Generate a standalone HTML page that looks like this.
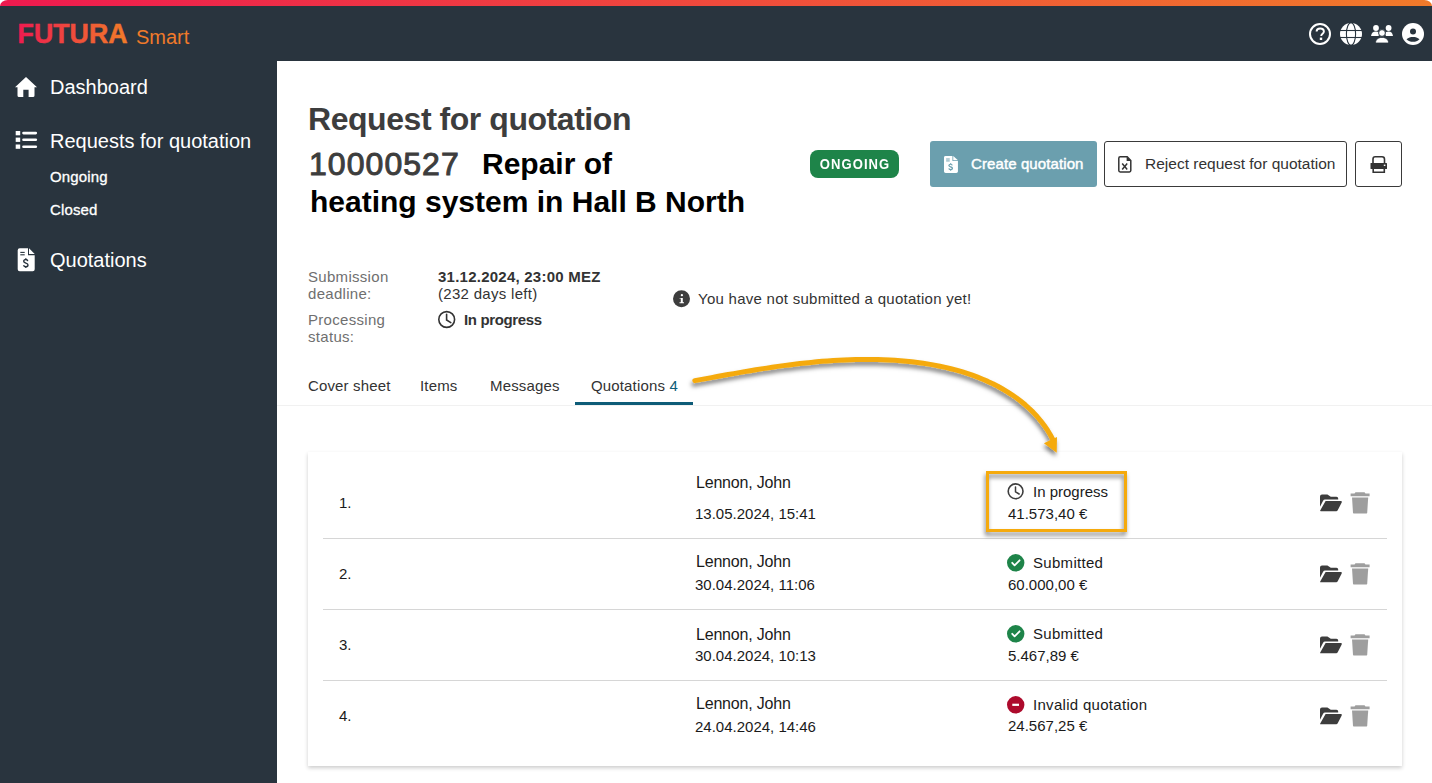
<!DOCTYPE html>
<html><head><meta charset="utf-8">
<style>
*{margin:0;padding:0;box-sizing:border-box}
html,body{width:1432px;height:783px;overflow:hidden;background:#fff;font-family:"Liberation Sans",sans-serif}
.abs{position:absolute;white-space:nowrap}
#topbar{position:absolute;left:0;top:6px;width:1432px;height:55px;background:#29343e}
#grad{position:absolute;left:0;top:0;width:1432px;height:6px;border-radius:9px 9px 0 0 / 7px 7px 0 0;background:linear-gradient(90deg,#ee1a4f 0%,#ef4a3c 50%,#f07a2a 100%)}
#side{position:absolute;left:0;top:61px;width:277px;height:722px;background:#29343e}
.nav{color:#fff;font-size:20px}
.row{font-size:15px;color:#1a1a1a;line-height:18px}
.name{font-size:16px;letter-spacing:-0.2px}
.sub{color:#fff;font-size:15px;-webkit-text-stroke:0.3px #fff;letter-spacing:0.15px}
</style></head>
<body>
<div id="grad"></div><div id="topbar"></div>
<div id="side"></div>

<!-- logo -->
<svg class="abs" style="left:0;top:0" width="200" height="61"><defs><linearGradient id="lg" gradientUnits="userSpaceOnUse" x1="17" y1="0" x2="128" y2="0"><stop offset="0" stop-color="#ee1a50"/><stop offset="1" stop-color="#f17d28"/></linearGradient></defs>
<text x="17.6" y="43.4" font-family="Liberation Sans" font-weight="bold" font-size="27.2" fill="url(#lg)" stroke="url(#lg)" stroke-width="0.45" textLength="110" lengthAdjust="spacingAndGlyphs">FUTURA</text></svg>
<div class="abs" style="left:136px;top:24px;font-size:20px;line-height:26px;color:#f07a2a">Smart</div>

<!-- nav -->
<div class="abs nav" style="left:50px;top:75px;line-height:24px">Dashboard</div>
<div class="abs nav" style="left:50px;top:129px;line-height:24px">Requests for quotation</div>
<div class="abs sub" style="left:50px;top:167px;line-height:20px">Ongoing</div>
<div class="abs sub" style="left:50px;top:200px;line-height:20px">Closed</div>
<div class="abs nav" style="left:50px;top:248px;line-height:24px">Quotations</div>

<!-- title -->
<div class="abs" style="left:308px;top:100px;font-size:32px;font-weight:bold;color:#3d3d3d;line-height:38px;letter-spacing:-0.45px">Request for quotation</div>
<div class="abs" style="left:309px;top:145px;font-size:32px;color:#3d3d3d;line-height:38px;letter-spacing:1.05px;-webkit-text-stroke:1px #3d3d3d">10000527</div>
<div class="abs" style="left:482px;top:145px;font-size:30px;font-weight:bold;color:#000;line-height:38px">Repair of</div>
<div class="abs" style="left:310px;top:183px;font-size:30px;font-weight:bold;color:#000;line-height:38px">heating system in Hall B North</div>


<!-- badge -->
<div class="abs" style="left:810px;top:150px;width:89px;height:28px;background:#1e8449;border-radius:8px"></div>
<div class="abs" style="left:810px;top:150px;width:89px;height:28px;color:#fff;font-size:14.5px;font-weight:bold;letter-spacing:1.2px;text-indent:1.2px;line-height:28px;text-align:center;transform:scaleX(0.9)">ONGOING</div>

<!-- create button -->
<div class="abs" style="left:930px;top:141px;width:167px;height:46px;background:#6b9fae;border-radius:3px"></div>
<div class="abs" style="left:971px;top:154px;font-size:15px;color:#fff;line-height:20px;-webkit-text-stroke:0.45px #fff;letter-spacing:0.1px">Create quotation</div>
<!-- reject button -->
<div class="abs" style="left:1104px;top:141px;width:243px;height:46px;border:1px solid #3a3a3a;border-radius:3px"></div>
<div class="abs" style="left:1145px;top:154px;font-size:15.5px;color:#333;line-height:20px">Reject request for quotation</div>
<!-- print button -->
<div class="abs" style="left:1355px;top:141px;width:47px;height:46px;border:1px solid #3a3a3a;border-radius:3px"></div>

<!-- details -->
<div class="abs" style="left:308px;top:268px;font-size:15px;color:#6f6f6f;line-height:17px;letter-spacing:0.3px">Submission<br>deadline:</div>
<div class="abs" style="left:438px;top:268px;font-size:15px;color:#333;line-height:17px;letter-spacing:0.3px"><b style="letter-spacing:0.24px">31.12.2024, 23:00 MEZ</b><br>(232 days left)</div>
<div class="abs" style="left:308px;top:311px;font-size:15px;color:#6f6f6f;line-height:17px;letter-spacing:0.3px">Processing<br>status:</div>
<div class="abs" style="left:464px;top:311px;font-size:15px;color:#333;line-height:17px;font-weight:bold;letter-spacing:-0.36px">In progress</div>
<div class="abs" style="left:698px;top:290px;font-size:15px;color:#333;line-height:18px;letter-spacing:0.27px">You have not submitted a quotation yet!</div>

<!-- tabs -->
<div class="abs" style="left:277px;top:405px;width:1155px;height:1px;background:#f1f1f1"></div>
<div class="abs" style="left:308px;top:377px;font-size:15px;color:#333;line-height:18px;letter-spacing:0.15px">Cover sheet</div>
<div class="abs" style="left:420px;top:377px;font-size:15px;color:#333;line-height:18px;letter-spacing:0.15px">Items</div>
<div class="abs" style="left:490px;top:377px;font-size:15px;color:#333;line-height:18px;letter-spacing:0.15px">Messages</div>
<div class="abs" style="left:591px;top:377px;font-size:15px;color:#333;line-height:18px;letter-spacing:0.15px">Quotations <span style="color:#0e5c78">4</span></div>
<div class="abs" style="left:575px;top:402px;width:118px;height:3px;background:#0e5c78"></div>

<!-- card -->
<div class="abs" style="left:308px;top:452px;width:1094px;height:314px;background:#fff;box-shadow:0 1.5px 4px rgba(0,0,0,0.2)"></div>
<div class="abs" style="left:323px;top:538px;width:1064px;height:1px;background:#d6d6d6"></div>
<div class="abs" style="left:323px;top:609px;width:1064px;height:1px;background:#d6d6d6"></div>
<div class="abs" style="left:323px;top:680px;width:1064px;height:1px;background:#d6d6d6"></div>

<div class="abs row" style="left:339px;top:494px">1.</div>
<div class="abs row name" style="left:696px;top:474.4px">Lennon, John</div>
<div class="abs row" style="left:695px;top:505px">13.05.2024, 15:41</div>
<div class="abs row" style="left:1033px;top:483px">In progress</div>
<div class="abs row" style="left:1008px;top:505px">41.573,40 €</div>

<div class="abs row" style="left:339px;top:565px">2.</div>
<div class="abs row name" style="left:696px;top:553.3px">Lennon, John</div>
<div class="abs row" style="left:695px;top:576px">30.04.2024, 11:06</div>
<div class="abs row" style="left:1033px;top:554px;letter-spacing:0.3px">Submitted</div>
<div class="abs row" style="left:1008px;top:576px">60.000,00 €</div>

<div class="abs row" style="left:339px;top:636px">3.</div>
<div class="abs row name" style="left:696px;top:625.5px">Lennon, John</div>
<div class="abs row" style="left:695px;top:647px">30.04.2024, 10:13</div>
<div class="abs row" style="left:1033px;top:625px;letter-spacing:0.3px">Submitted</div>
<div class="abs row" style="left:1008px;top:647px">5.467,89 €</div>

<div class="abs row" style="left:339px;top:707px">4.</div>
<div class="abs row name" style="left:696px;top:694.5px">Lennon, John</div>
<div class="abs row" style="left:695px;top:718px">24.04.2024, 14:46</div>
<div class="abs row" style="left:1033px;top:696px;letter-spacing:0.3px">Invalid quotation</div>
<div class="abs row" style="left:1008px;top:717px">24.567,25 €</div>

<!-- highlight box -->


<svg class="abs" style="left:0;top:0;pointer-events:none" width="1432" height="783" viewBox="0 0 1432 783">
<defs>
<filter id="sh" x="-10%" y="-20%" width="120%" height="150%"><feDropShadow dx="-1" dy="3.5" stdDeviation="2" flood-color="#000" flood-opacity="0.5"/></filter>
</defs>
<!-- header icons -->
<circle cx="1320" cy="34" r="10" fill="none" stroke="#fff" stroke-width="2"/>
<path d="M1316.6,31.6 C1316.6,29.5 1318.2,28.5 1320.2,28.5 C1322.3,28.5 1323.9,29.7 1323.9,31.4 C1323.9,33.6 1321.2,33.8 1321.2,36" fill="none" stroke="#fff" stroke-width="1.9"/>
<rect x="1319.8" y="37.6" width="2.4" height="2.4" fill="#fff"/>
<circle cx="1351" cy="34" r="11" fill="#fff"/>
<g stroke="#29343e" stroke-width="1.1" fill="none">
<line x1="1339" y1="30.5" x2="1363" y2="30.5"/><line x1="1339" y1="37.5" x2="1363" y2="37.5"/>
<ellipse cx="1351" cy="34" rx="4.6" ry="11.3"/>
</g>
<circle cx="1376" cy="28" r="2.9" fill="#fff"/>
<circle cx="1388.6" cy="28" r="2.9" fill="#fff"/>
<path d="M1371,36 C1371.5,33 1373,31.6 1376,31.6 C1378,31.6 1379,32.3 1379.6,33.5 L1378.5,36 Z" fill="#fff"/>
<path d="M1393,36 C1392.5,33 1391,31.6 1388.6,31.6 C1386.5,31.6 1385.5,32.3 1384.9,33.5 L1386,36 Z" fill="#fff"/>
<circle cx="1382" cy="33" r="3.4" fill="#fff" stroke="#29343e" stroke-width="1"/>
<path d="M1375.5,43 C1375.5,39.5 1378.3,37.4 1382,37.4 C1385.8,37.4 1388.6,39.5 1388.6,43 Z" fill="#fff" stroke="#29343e" stroke-width="0.8"/>
<circle cx="1413" cy="34" r="11" fill="#fff"/>
<circle cx="1413" cy="31.5" r="3" fill="#29343e"/>
<path d="M1406.5,39.3 C1408.5,37.6 1410.5,37 1413,37 C1415.5,37 1417.5,37.6 1419.5,39.3 C1417.5,41.2 1415.5,41.8 1413,41.8 C1410.5,41.8 1408.5,41.2 1406.5,39.3 Z" fill="#29343e"/>

<!-- sidebar icons -->
<path d="M26,77 L37,87.3 L34.5,87.3 L34.5,95.5 Q34.5,97 33,97 L28.6,97 L28.6,89.8 L23.3,89.8 L23.3,97 L19,97 Q17.5,97 17.5,95.5 L17.5,87.3 L15,87.3 Z" fill="#fff"/>
<g fill="#fff"><rect x="15.7" y="131" width="4.5" height="4.3"/><rect x="15.7" y="137.6" width="4.5" height="4.3"/><rect x="15.7" y="144.5" width="4.5" height="4.3"/></g>
<g stroke="#fff" stroke-width="2.6" stroke-linecap="round"><line x1="23.5" y1="133.1" x2="35.8" y2="133.1"/><line x1="23.5" y1="139.8" x2="35.8" y2="139.8"/><line x1="23.5" y1="146.7" x2="35.8" y2="146.7"/></g>
<g transform="translate(17.7,248.2)">
<path d="M2,0 L10.3,0 L10.3,7 L17,7 L17,21 Q17,23 15,23 L2,23 Q0,23 0,21 L0,2 Q0,0 2,0 Z" fill="#fff"/>
<path d="M11.3,0 L17,5.8 L11.3,5.8 Z" fill="#fff"/>
<g stroke="#29343e" stroke-width="1.1"><line x1="2.6" y1="4.2" x2="7" y2="4.2"/><line x1="2.6" y1="6.6" x2="7" y2="6.6"/></g>
<path d="M10.1,12.9 C9.8,11.8 9,11.3 8.1,11.3 C6.9,11.3 6,12 6,13.1 C6,15.4 10.3,14.4 10.3,16.8 C10.3,17.9 9.3,18.6 8.1,18.6 C7.1,18.6 6.2,18.1 5.8,17.1 M8.1,10 L8.1,11.3 M8.1,18.6 L8.1,19.9" fill="none" stroke="#29343e" stroke-width="1.4"/>
</g>

<!-- create icon -->
<g transform="translate(944,155.9) scale(0.82,0.74)">
<path d="M2,0 L10.3,0 L10.3,7 L17,7 L17,21 Q17,23 15,23 L2,23 Q0,23 0,21 L0,2 Q0,0 2,0 Z" fill="#fff"/>
<path d="M11.3,0 L17,5.8 L11.3,5.8 Z" fill="#fff"/>
<g stroke="#6b9fae" stroke-width="1.3"><line x1="2.6" y1="4.2" x2="7" y2="4.2"/><line x1="2.6" y1="6.8" x2="7" y2="6.8"/></g>
<path d="M10.1,12.9 C9.8,11.8 9,11.3 8.1,11.3 C6.9,11.3 6,12 6,13.1 C6,15.4 10.3,14.4 10.3,16.8 C10.3,17.9 9.3,18.6 8.1,18.6 C7.1,18.6 6.2,18.1 5.8,17.1 M8.1,10 L8.1,11.3 M8.1,18.6 L8.1,19.9" fill="none" stroke="#6b9fae" stroke-width="1.6"/>
</g>
<!-- reject icon -->
<path d="M1120.2,156.8 L1127.2,156.8 L1130.8,160.6 L1130.8,170.6 Q1130.8,172 1129.4,172 L1120.2,172 Q1118.8,172 1118.8,170.6 L1118.8,158.2 Q1118.8,156.8 1120.2,156.8 Z" fill="none" stroke="#333" stroke-width="1.5"/>
<path d="M1126.6,156.8 L1131,161 L1126.6,161 Z" fill="#333"/>
<g stroke="#333" stroke-width="1.5"><line x1="1122.2" y1="163.6" x2="1127.2" y2="169.6"/><line x1="1127.2" y1="163.6" x2="1122.2" y2="169.6"/></g>
<!-- print icon -->
<path d="M1373,163 L1373,159 Q1373,156.8 1375.2,156.8 L1382,156.8 Q1384.5,156.8 1384.5,159.3 L1384.5,163" fill="none" stroke="#333" stroke-width="1.6"/>
<rect x="1370.5" y="163" width="16.5" height="6" rx="0.5" fill="#333"/>
<rect x="1383.8" y="164.6" width="1.6" height="1.4" fill="#fff"/>
<path d="M1373.2,168 L1373.2,172.3 L1384.3,172.3 L1384.3,168" fill="none" stroke="#333" stroke-width="1.6"/>

<!-- details clock -->
<circle cx="446.7" cy="319.5" r="7.9" fill="none" stroke="#333" stroke-width="1.6"/>
<path d="M446.6,314.3 L446.6,320 L450.8,322.6" fill="none" stroke="#333" stroke-width="1.6" stroke-linecap="round"/>
<!-- info icon -->
<circle cx="681.5" cy="298.8" r="8.5" fill="#3d3d3d"/>
<circle cx="681.9" cy="295.2" r="1.15" fill="#fff"/>
<path d="M679.5,297.9 L682.8,297.9 L682.8,302.3 L684,302.3 L684,303.2 L679.5,303.2 L679.5,302.3 L680.8,302.3 L680.8,298.5 L679.5,298.5 Z" fill="#fff"/>

<!-- row status icons -->
<circle cx="1015.6" cy="491.3" r="7.4" fill="none" stroke="#3d3d3d" stroke-width="1.6"/>
<path d="M1015.5,486.9 L1015.5,491.8 L1019.1,494" fill="none" stroke="#3d3d3d" stroke-width="1.5" stroke-linecap="round"/>
<circle cx="1015.7" cy="562.8" r="8.7" fill="#1e8449"/>
<path d="M1012.2,562.8 L1014.6,565.3 L1019.6,560.3" fill="none" stroke="#fff" stroke-width="1.8" stroke-linecap="round" stroke-linejoin="round"/>
<circle cx="1015.7" cy="633.8" r="8.7" fill="#1e8449"/>
<path d="M1012.2,633.8 L1014.6,636.3 L1019.6,631.3" fill="none" stroke="#fff" stroke-width="1.8" stroke-linecap="round" stroke-linejoin="round"/>
<circle cx="1015.7" cy="704.8" r="8.7" fill="#ad0a2c"/>
<rect x="1012.3" y="703.7" width="6.7" height="2.2" fill="#fff"/>

<!-- folder + trash icons -->
<g id="ft">
<path d="M1320,496.5 Q1320,494.4 1322,494.4 L1327.4,494.4 L1330.8,496.8 L1336.4,496.8 Q1338.2,496.8 1338.2,498.6 L1338.2,499.6 L1325,499.6 Q1323.7,499.6 1323.1,500.7 L1320,506.8 Z" fill="#3d3d3d"/>
<path d="M1325.6,501.1 L1340.8,501.1 Q1342.3,501.1 1341.7,502.4 L1337.7,510.3 Q1337.2,511.3 1336.2,511.3 L1320.8,511.3 Q1319.8,511.3 1320.2,510.4 Z" fill="#3d3d3d"/>
<path d="M1355.5,492.2 L1364.5,492.2 L1365.5,493.6 L1369.6,493.6 L1369.6,496.2 L1350.6,496.2 L1350.6,493.6 L1354.5,493.6 Z" fill="#9e9e9e"/>
<path d="M1352,497.6 L1368.2,497.6 L1367.2,512.4 Q1367.1,513.6 1365.9,513.6 L1354.3,513.6 Q1353.1,513.6 1353,512.4 Z" fill="#9e9e9e"/>
</g>
<use href="#ft" y="71"/>
<use href="#ft" y="142"/>
<use href="#ft" y="213"/>

<!-- highlight -->
<rect x="987.5" y="472.5" width="138" height="58" fill="none" stroke="#f5aa0b" stroke-width="3" filter="url(#sh)"/>
<!-- arrow -->
<g filter="url(#sh)">
<path d="M694.8,380.6 L700.4,379.6 L706.0,378.6 L711.5,377.6 L717.1,376.5 L722.6,375.5 L728.1,374.5 L733.7,373.6 L739.2,372.6 L744.7,371.6 L750.3,370.7 L755.8,369.8 L761.3,368.9 L766.8,368.1 L772.3,367.2 L777.8,366.4 L783.4,365.6 L788.9,364.9 L794.4,364.2 L799.9,363.5 L805.5,362.9 L811.0,362.4 L816.5,361.8 L822.1,361.3 L827.6,360.9 L833.2,360.5 L838.7,360.2 L844.3,359.9 L849.9,359.7 L855.5,359.5 L861.1,359.4 L866.7,359.4 L872.3,359.4 L877.9,359.6 L883.6,359.7 L889.3,360.0 L894.9,360.3 L900.6,360.7 L906.2,361.2 L911.9,361.8 L917.5,362.5 L923.2,363.3 L928.8,364.1 L934.4,365.1 L939.9,366.2 L945.4,367.4 L950.9,368.7 L956.4,370.1 L961.8,371.7 L967.1,373.4 L972.4,375.2 L977.6,377.1 L982.8,379.2 L987.8,381.4 L992.9,383.8 L997.8,386.3 L1002.6,389.0 L1007.4,391.8 L1012.0,394.8 L1016.6,398.0 L1020.9,401.3 L1025.2,404.8 L1029.3,408.5 L1033.3,412.4 L1037.1,416.5 L1040.7,420.8 L1044.1,425.3 L1047.4,430.0 L1050.4,435.0 L1052.6,439.2" fill="none" stroke="#f5aa0b" stroke-width="5" stroke-linecap="round" stroke-linejoin="round"/>
<path d="M1043.9,443.2 L1057,437.1 L1056.7,452.8 Z" fill="#f5aa0b"/>
</g>
</svg>
</body></html>
